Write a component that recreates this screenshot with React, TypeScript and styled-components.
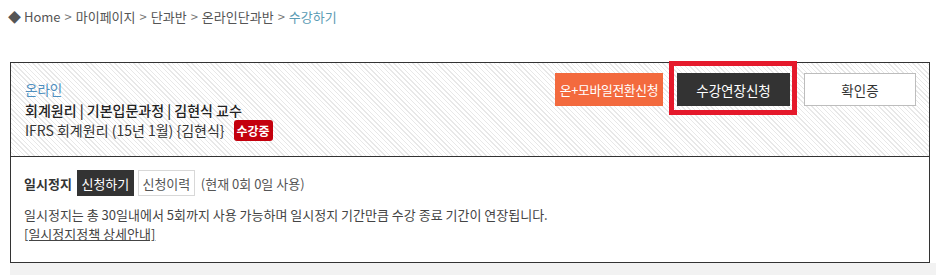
import React from 'react';
import styled, { createGlobalStyle } from 'styled-components';

const GlobalStyle = createGlobalStyle`
  html, body {
    margin: 0;
    padding: 0;
    background: #fff;
  }
  body {
    font-family: "Noto Sans CJK KR", "Liberation Sans", sans-serif;
    color: #333;
  }
`;

const Page = styled.div`
  width: 936px;
  height: 275px;
  overflow: hidden;
`;

const Breadcrumb = styled.div`
  display: flex;
  align-items: center;
  height: 16px;
  padding: 8px 0 0 8px;
  font-size: 13px;
  color: #555;
  white-space: pre;
`;

const Crumb = styled.span<{ $current?: boolean }>`
  color: ${p => (p.$current ? '#5a9bb4' : '#555')};
`;

const Sep = styled.span`
  color: #777;
  padding: 0 4px;
`;

const Panel = styled.div`
  margin: 38px 0 0 10px;
  width: 918px;
  border: 1px solid #333;
`;

const Head = styled.div`
  display: flex;
  justify-content: space-between;
  align-items: flex-start;
  height: 93px;
  padding: 0 13px 0 14px;
  border-bottom: 1px solid #333;
  background-color: #fff;
  background-image: repeating-linear-gradient(
    45deg,
    #fff 0px,
    #fff 2.4px,
    #e8e8e8 2.4px,
    #e8e8e8 3.4px
  );
`;

const CourseInfo = styled.div`
  display: flex;
  flex-direction: column;
  padding-top: 16px;
`;

const Line = styled.div<{ $tone?: 'blue' | 'strong' | 'plain' }>`
  display: flex;
  align-items: center;
  height: 20.5px;
  font-size: ${p => (p.$tone === 'blue' ? 13.5 : 14)}px;
  font-weight: ${p => (p.$tone === 'strong' ? 500 : 400)};
  color: ${p => (p.$tone === 'blue' ? '#4f8fbf' : p.$tone === 'strong' ? '#222' : '#333')};
  white-space: pre;
`;

const Badge = styled.span`
  display: inline-flex;
  align-items: center;
  justify-content: center;
  width: 39px;
  height: 21px;
  margin-left: 9px;
  border-radius: 3px;
  background: #c4000d;
  color: #fff;
  font-size: 12px;
  font-weight: 700;
`;

const Actions = styled.div`
  display: flex;
  gap: 14px;
  padding-top: 10px;
`;

const ActionWrap = styled.div`
  position: relative;
`;

const Highlight = styled.div`
  position: absolute;
  left: -8px;
  top: -12px;
  right: -7px;
  bottom: -9px;
  border: 5px solid #e5192b;
  pointer-events: none;
`;

const ActionButton = styled.button<{ $variant: 'orange' | 'dark' | 'light'; $w: number }>`
  display: flex;
  align-items: center;
  justify-content: center;
  width: ${p => p.$w}px;
  height: 33px;
  padding: 0;
  font-family: inherit;
  font-size: ${p => (p.$variant === 'orange' ? 12.8 : 13.5)}px;
  letter-spacing: ${p => (p.$variant === 'orange' ? '-0.3px' : '0')};
  white-space: nowrap;
  cursor: pointer;
  background: ${p => (p.$variant === 'orange' ? '#f36a3e' : p.$variant === 'dark' ? '#333' : '#fff')};
  color: ${p => (p.$variant === 'light' ? '#333' : '#fff')};
  border: 1px solid ${p => (p.$variant === 'orange' ? '#f36a3e' : p.$variant === 'dark' ? '#333' : '#bdbdbd')};
`;

const Body = styled.div`
  display: flex;
  flex-direction: column;
  height: 92px;
  padding: 13px 14px 0 13px;
  font-size: 13px;
  color: #444;
`;

const PauseRow = styled.div`
  display: flex;
  align-items: center;
  gap: 4px;
  height: 26px;
  white-space: pre;
`;

const PauseLabel = styled.strong`
  font-size: 13px;
  font-weight: 700;
  color: #333;
  margin-right: 1px;
`;

const SmallButton = styled.button<{ $active?: boolean }>`
  display: flex;
  align-items: center;
  justify-content: center;
  width: 57px;
  height: 26px;
  padding: 0;
  font-family: inherit;
  font-size: 13px;
  cursor: pointer;
  background: ${p => (p.$active ? '#333' : '#fff')};
  color: ${p => (p.$active ? '#fff' : '#555')};
  border: 1px solid ${p => (p.$active ? '#333' : '#d8d8d8')};
`;

const Usage = styled.span`
  margin-left: 2px;
  color: #555;
`;

const Note = styled.p`
  margin: 10px 0 0;
  height: 18px;
  line-height: 18px;
  color: #444;
`;

const PolicyLink = styled.a`
  display: inline-block;
  margin-top: 1px;
  line-height: 18px;
  color: #444;
  text-decoration: underline;
  align-self: flex-start;
`;

const NextBlock = styled.div`
  margin-left: 10px;
  height: 14px;
  background: #f2f2f2;
`;

const crumbs = ['마이페이지', '단과반', '온라인단과반'];

export default function App() {
  return (
    <Page>
      <GlobalStyle />
      <Breadcrumb>
        <Crumb>◆ Home</Crumb>
        {crumbs.map(c => (
          <React.Fragment key={c}>
            <Sep>&gt;</Sep>
            <Crumb>{c}</Crumb>
          </React.Fragment>
        ))}
        <Sep>&gt;</Sep>
        <Crumb $current>수강하기</Crumb>
      </Breadcrumb>

      <Panel>
        <Head>
          <CourseInfo>
            <Line $tone="blue">온라인</Line>
            <Line $tone="strong">회계원리 | 기본입문과정 | 김현식 교수</Line>
            <Line $tone="plain">
              IFRS 회계원리 (15년 1월) {'{김현식}'}
              <Badge>수강중</Badge>
            </Line>
          </CourseInfo>
          <Actions>
            <ActionButton $variant="orange" $w={108}>온+모바일전환신청</ActionButton>
            <ActionWrap>
              <ActionButton $variant="dark" $w={113}>수강연장신청</ActionButton>
              <Highlight />
            </ActionWrap>
            <ActionButton $variant="light" $w={112}>확인증</ActionButton>
          </Actions>
        </Head>
        <Body>
          <PauseRow>
            <PauseLabel>일시정지</PauseLabel>
            <SmallButton $active>신청하기</SmallButton>
            <SmallButton>신청이력</SmallButton>
            <Usage>(현재 0회 0일 사용)</Usage>
          </PauseRow>
          <Note>일시정지는 총 30일내에서 5회까지 사용 가능하며 일시정지 기간만큼 수강 종료 기간이 연장됩니다.</Note>
          <PolicyLink href="#">[일시정지정책 상세안내]</PolicyLink>
        </Body>
      </Panel>
      <NextBlock />
    </Page>
  );
}
